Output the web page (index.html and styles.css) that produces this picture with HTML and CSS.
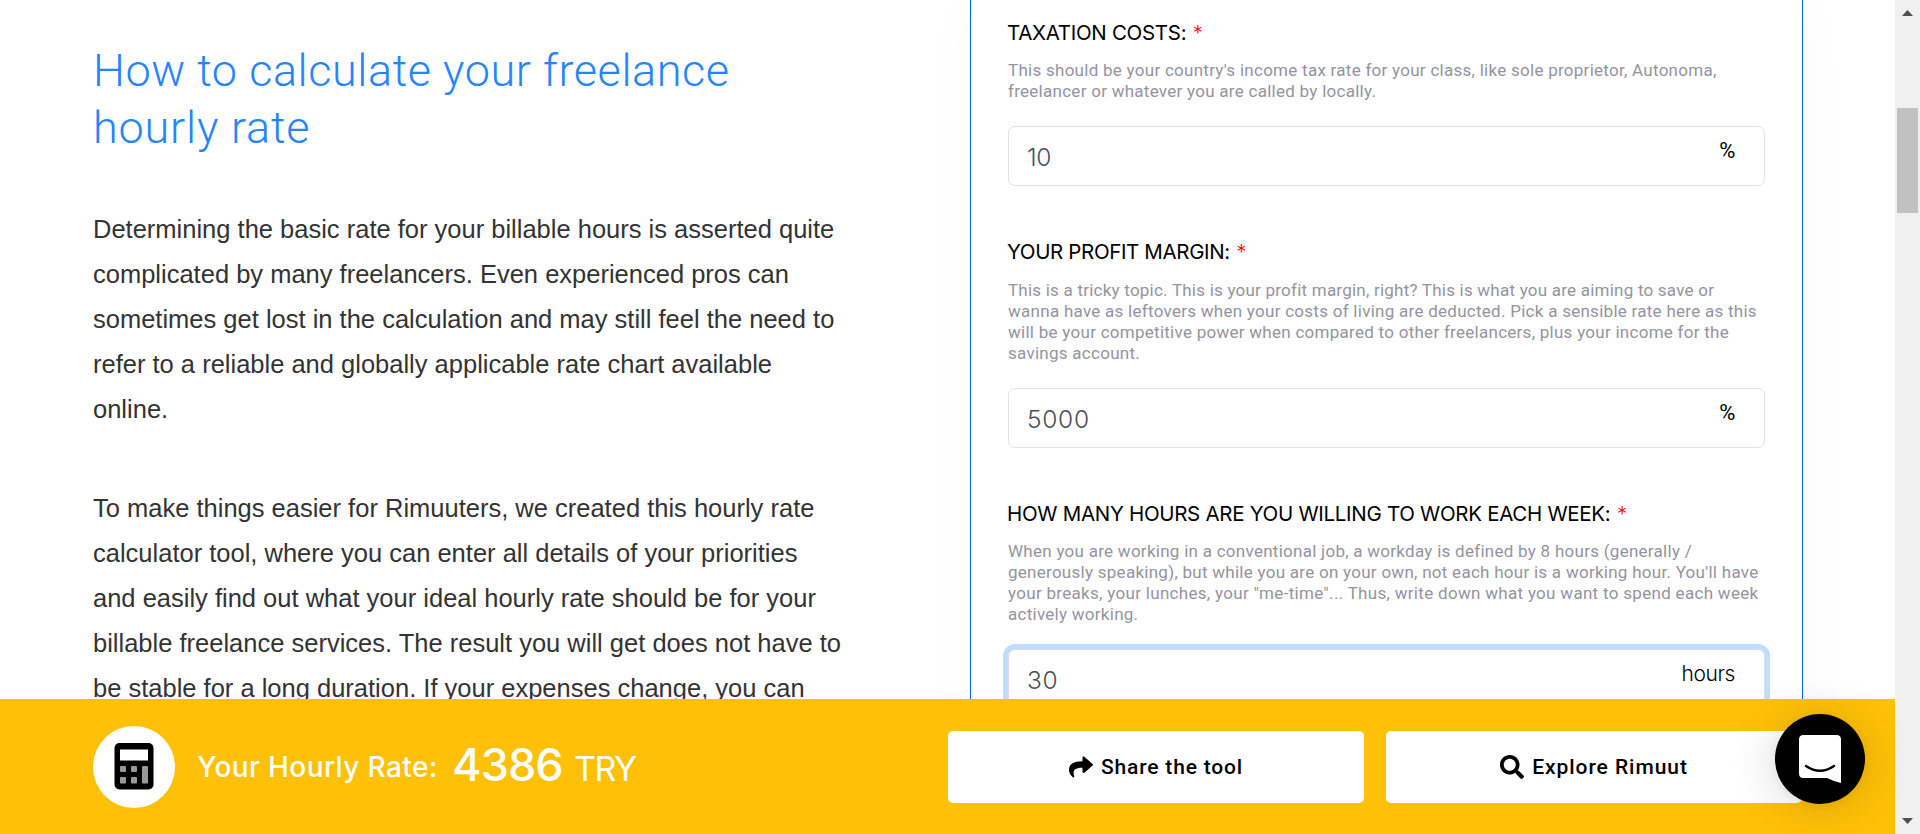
FILE: index.html
```
<!DOCTYPE html>
<html lang="en">
<head>
<meta charset="utf-8">
<title>Freelance Hourly Rate Calculator</title>
<link rel="stylesheet" href="styles.css">
</head>
<body>
<div class="window">
  <div class="page">
    <main class="content">
      <article class="article">
        <h2 class="article-title">How to calculate your freelance<br><span class="title-end">hourly rate</span></h2>
        <p class="article-text">Determining the basic rate for your billable hours is asserted quite<br>complicated by many freelancers. Even experienced pros can<br>sometimes get lost in the calculation and may still feel the need to<br>refer to a reliable and globally applicable rate chart available<br>online.</p>
        <p class="article-text">To make things easier for Rimuuters, we created this hourly rate<br>calculator tool, where you can enter all details of your priorities<br>and easily find out what your ideal hourly rate should be for your<br>billable freelance services. The result you will get does not have to<br>be stable for a long duration. If your expenses change, you can</p>
      </article>
      <form class="card">
        <div class="field">
          <label class="label">TAXATION COSTS: <span class="required">*</span></label>
          <p class="help">This should be your country's income tax rate for your class, like sole proprietor, Autonoma,<br>freelancer or whatever you are called by locally.</p>
          <div class="input"><span class="value value-ten">10</span><span class="unit unit-percent">%</span></div>
        </div>
        <div class="field field-margin">
          <label class="label">YOUR PROFIT MARGIN: <span class="required">*</span></label>
          <p class="help"><span class="help-lead">This is a tricky topic. This is your profit margin, right? This is what you are aiming to save or</span><br>wanna have as leftovers when your costs of living are deducted. Pick a sensible rate here as this<br>will be your competitive power when compared to other freelancers, plus your income for the<br>savings account.</p>
          <div class="input"><span class="value">5000</span><span class="unit unit-percent">%</span></div>
        </div>
        <div class="field">
          <label class="label">HOW MANY HOURS ARE YOU WILLING TO WORK EACH WEEK: <span class="required">*</span></label>
          <p class="help">When you are working in a conventional job, a workday is defined by 8 hours (generally /<br>generously speaking), but while you are on your own, not each hour is a working hour. You'll have<br><span class="help-wide">your breaks, your lunches, your "me-time"... Thus, write down what you want to spend each week</span><br>actively working.</p>
          <div class="input input-focus"><span class="value">30</span><span class="unit">hours</span></div>
        </div>
      </form>
    </main>
    <footer class="bar">
      <div class="calc-badge">
        <svg width="40" height="47" viewBox="0 0 40 47">
          <rect x="0.500" width="39" height="46.500" rx="5" fill="#000"/>
          <rect x="6" y="6.500" width="28" height="11" fill="#fff"/>
          <g fill="#999"><rect x="6" y="23" width="6" height="6" rx="1"/><rect x="17" y="23" width="6" height="6" rx="1"/><rect x="6" y="34" width="6" height="6.500" rx="1"/><rect x="17" y="34" width="6" height="6.500" rx="1"/><rect x="28" y="23" width="6" height="17.500" rx="1"/></g>
        </svg>
      </div>
      <div class="rate"><span class="rate-label">Your Hourly Rate:</span><span class="rate-value">4386</span><span class="rate-currency">TRY</span></div>
      <div class="actions">
        <a class="button">
          <svg class="icon" width="24" height="24" viewBox="0 0 512 512"><path d="M503.700 226.200l-176 151.900c-15.400 13.300-39.700 2.500-39.700-18.200V272.100C132.900 274.300 66.100 312.800 111.400 457.800c5 16.100-14.400 28.600-28.100 18.700C39.600 444.600 0 383.800 0 322.300 0 170.200 127.300 137.400 288 135.500V56c0-20.700 24.300-31.500 39.700-18.200l176 151.900c11.100 9.600 11.100 26.900 0 36.500z"/></svg>
          <span>Share the tool</span>
        </a>
        <a class="button button-explore">
          <svg class="icon" width="24" height="24" viewBox="0 0 512 512"><path d="M505 442.700L405.300 343c-4.500-4.500-10.600-7-17-7H372c27.600-35.300 44-79.700 44-128C416 93.100 322.900 0 208 0S0 93.100 0 208s93.100 208 208 208c48.300 0 92.700-16.400 128-44v16.300c0 6.400 2.500 12.500 7 17l99.700 99.700c9.400 9.400 24.600 9.400 33.900 0l28.300-28.300c9.400-9.400 9.400-24.600.1-34zM208 336c-70.700 0-128-57.200-128-128 0-70.700 57.200-128 128-128 70.700 0 128 57.200 128 128 0 70.700-57.200 128-128 128z"/></svg>
          <span>Explore Rimuut</span>
        </a>
      </div>
    </footer>
  </div>
  <div class="scrollbar">
    <svg class="arrow" width="11" height="6" viewBox="0 0 11 6"><path d="M0 6L5.500 0L11 6z"/></svg>
    <div class="thumb"></div>
    <svg class="arrow arrow-down" width="11" height="6" viewBox="0 0 11 6"><path d="M0 0L5.500 6L11 0z"/></svg>
  </div>
  <div class="chat">
    <svg width="42" height="48" viewBox="0 0 42 48">
      <path d="M4.500 0H37.500Q42 0 42 4.500V48Q35 46.500 28 43H4.500Q0 43 0 38.500V4.500Q0 0 4.500 0z" fill="#fff"/>
      <path d="M7 31Q21 40.500 35 31" fill="none" stroke="#000" stroke-width="2.500" stroke-linecap="round"/>
    </svg>
  </div>
</div>
</body>
</html>
```
FILE: styles.css
```
* { box-sizing: border-box; }
body { margin: 0; background: #fff; font-family: Roboto, sans-serif; }
h2, p { margin: 0; font-weight: 400; }

.window { position: relative; display: flex; width: 1920px; height: 834px; overflow: hidden; }
.page { display: flex; flex-direction: column; width: 1895px; height: 834px; }

.content { display: flex; height: 699px; overflow: hidden; white-space: nowrap; }
.article { width: 970px; padding: 42px 0 0 93px; }
.article-title { margin-bottom: 51px; color: #2684ff; font-size: 45px; font-weight: 300; line-height: 57px; letter-spacing: 0.56px; }
.title-end { letter-spacing: 0.8px; }
.article-text { margin-bottom: 54px; color: #333; font: 25.5px/45px "Liberation Sans", Arial, sans-serif; }

.card { width: 833px; height: 900px; padding: 21px 36px 0 37px; border: solid #0065f5; border-width: 0 1px; box-shadow: 0 0 60px rgba(0, 0, 0, 0.025); }
.field { margin-bottom: 54px; }
.label { display: block; margin: 0 0 15px -1px; color: #000; font-family: Inter, sans-serif; font-size: 20.5px; line-height: 24px; letter-spacing: -0.3px; }
.field-margin .label { margin-bottom: 16px; letter-spacing: -0.36px; }
.required { color: #f00; font-weight: 300; margin-left: 1px; }
.help { margin-bottom: 24px; color: #9494a0; font-size: 17px; line-height: 21px; letter-spacing: 0.27px; }
.help-lead { letter-spacing: 0.225px; }
.help-wide { letter-spacing: 0.305px; }
.input { display: flex; justify-content: space-between; width: 757px; height: 60px; padding: 0 29px 0 18px; border: 1px solid #e1e1e9; border-radius: 7px; background: #fff; font-family: Inter, sans-serif; }
.input-focus { border-color: #d6dcea; box-shadow: 0 0 0 5px #bfdeff; }
.value { color: #495057; font-size: 24.5px; font-weight: 350; line-height: 60px; letter-spacing: 0.7px; }
.value-ten { letter-spacing: -0.5px; }
.unit { color: #000; font-size: 21px; font-weight: 350; line-height: 48px; letter-spacing: -0.4px; }
.unit-percent { font-family: Roboto, sans-serif; font-size: 22px; font-weight: 400; }

.bar { display: flex; align-items: center; height: 135px; padding: 0 93px; background: #ffc107; color: #fff; }
.calc-badge { display: flex; align-items: center; justify-content: center; width: 82px; height: 82px; border-radius: 50%; background: #fff; }
.rate { display: flex; align-items: baseline; width: 750px; padding: 0 0 3px 22px; font-family: Inter, sans-serif; white-space: nowrap; }
.rate-label { width: 255px; padding-bottom: 5px; font-size: 28px; font-weight: 500; letter-spacing: 0.4px; transform: translateY(-4px); }
.rate-value { width: 122px; font-size: 45px; font-weight: 500; letter-spacing: -0.9px; }
.rate-currency { font-size: 34px; font-weight: 400; letter-spacing: -1.5px; }
.actions { display: flex; flex: none; gap: 22px; margin-left: 23px; }
.button { display: flex; align-items: center; justify-content: center; gap: 8px; width: 416px; height: 72px; border-radius: 5px; background: #fff; color: #000; font-size: 21px; font-weight: 500; letter-spacing: 0.82px; white-space: nowrap; }
.button-explore { letter-spacing: 0.95px; }
.icon { flex: none; fill: #000; }

.scrollbar { display: flex; flex-direction: column; align-items: center; width: 25px; padding: 10px 0; background: #f0f0f0; }
.arrow { flex: none; fill: #505050; }
.arrow-down { margin-top: auto; }
.thumb { width: 21px; height: 105px; margin-top: 92px; background: #c1c1c1; }

.chat { position: absolute; right: 55px; bottom: 30px; display: flex; align-items: center; justify-content: center; width: 90px; height: 90px; border-radius: 50%; background: #000; box-shadow: 0 2px 9px rgba(0, 0, 0, 0.06), 0 3px 48px rgba(0, 0, 0, 0.16); }
```
